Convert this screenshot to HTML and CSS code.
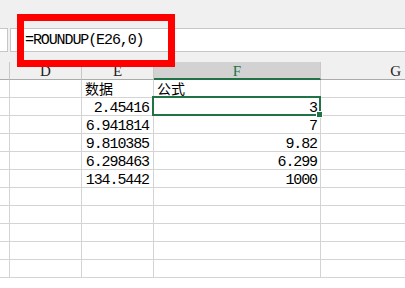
FILE: index.html
```html
<!DOCTYPE html>
<html lang="zh-CN">
<head>
    <meta charset="UTF-8">
    <title>ROUNDUP</title>
    <link rel="stylesheet" href="styles.css">
</head>
<body>
    <div class="formula-area">
        <div class="formula-bar">
            <div class="name-box"></div>
            <div class="fx-box">=ROUNDUP(E26,0)</div>
        </div>
    </div>

    <div class="sheet">
        <div class="row header">
            <div class="cell c-c"></div>
            <div class="cell c-d">D</div>
            <div class="cell c-e">E</div>
            <div class="cell c-f active">F</div>
            <div class="cell c-g">G</div>
        </div>
        <div class="row">
            <div class="cell c-c"></div>
            <div class="cell c-d"></div>
            <div class="cell c-e cjk">数据</div>
            <div class="cell c-f cjk">公式</div>
            <div class="cell c-g"></div>
        </div>
        <div class="row">
            <div class="cell c-c"></div>
            <div class="cell c-d"></div>
            <div class="cell c-e num">2.45416</div>
            <div class="cell c-f num selected">3<span class="fill-handle"></span></div>
            <div class="cell c-g"></div>
        </div>
        <div class="row">
            <div class="cell c-c"></div>
            <div class="cell c-d"></div>
            <div class="cell c-e num">6.941814</div>
            <div class="cell c-f num">7</div>
            <div class="cell c-g"></div>
        </div>
        <div class="row">
            <div class="cell c-c"></div>
            <div class="cell c-d"></div>
            <div class="cell c-e num">9.810385</div>
            <div class="cell c-f num">9.82</div>
            <div class="cell c-g"></div>
        </div>
        <div class="row">
            <div class="cell c-c"></div>
            <div class="cell c-d"></div>
            <div class="cell c-e num">6.298463</div>
            <div class="cell c-f num">6.299</div>
            <div class="cell c-g"></div>
        </div>
        <div class="row">
            <div class="cell c-c"></div>
            <div class="cell c-d"></div>
            <div class="cell c-e num">134.5442</div>
            <div class="cell c-f num">1000</div>
            <div class="cell c-g"></div>
        </div>
        <div class="row">
            <div class="cell c-c"></div><div class="cell c-d"></div><div class="cell c-e"></div><div class="cell c-f"></div><div class="cell c-g"></div>
        </div>
        <div class="row">
            <div class="cell c-c"></div><div class="cell c-d"></div><div class="cell c-e"></div><div class="cell c-f"></div><div class="cell c-g"></div>
        </div>
        <div class="row">
            <div class="cell c-c"></div><div class="cell c-d"></div><div class="cell c-e"></div><div class="cell c-f"></div><div class="cell c-g"></div>
        </div>
        <div class="row">
            <div class="cell c-c"></div><div class="cell c-d"></div><div class="cell c-e"></div><div class="cell c-f"></div><div class="cell c-g"></div>
        </div>
        <div class="row">
            <div class="cell c-c"></div><div class="cell c-d"></div><div class="cell c-e"></div><div class="cell c-f"></div><div class="cell c-g"></div>
        </div>
    </div>

    <!-- annotation box round the formula -->
    <div class="highlight"></div>
</body>
</html>
```

FILE: styles.css
```css
* {
    margin: 0;
    padding: 0;
    box-sizing: border-box;
}

body {
    width: 405px;
    height: 288px;
    overflow: hidden;
    background: #fff;
    position: relative;
    font-family: "Liberation Mono", "DejaVu Sans Mono", monospace;
    color: #000;
}

/* Formula bar */
.formula-area {
    background: #f0f0f0;
    padding: 28px 0 10px;
}

.formula-bar {
    display: flex;
    height: 24px;
}

.name-box {
    width: 8px;
    background: #fff;
    border: 1px solid #c6c6c6;
    border-left: none;
    margin-right: 2px;
}

.fx-box {
    flex: 1;
    background: #fff;
    border: 1px solid #c6c6c6;
    border-right: none;
    padding-left: 14px;
    font-size: 15px;
    letter-spacing: -1.1px;
    line-height: 23px;
    white-space: nowrap;
    overflow: hidden;
}

/* Sheet */
.sheet {
    width: 405px;
    overflow: hidden;
}

.row {
    display: flex;
    height: 18px;
}

.cell {
    height: 18px;
    border-right: 1px solid #d4d4d4;
    border-bottom: 1px solid #d4d4d4;
    font-size: 15px;
    letter-spacing: -1.1px;
    line-height: 21px;
    white-space: nowrap;
    flex-shrink: 0;
    position: relative;
}

.c-c { width: 10px; }
.c-d { width: 72px; }
.c-e { width: 72px; }
.c-f { width: 167px; }
.c-g { width: 84px; border-right: none; }

.header .cell {
    background: #f0f0f0;
    border-right-color: #c8c8c8;
    border-bottom-color: #ababab;
    text-align: center;
    font-family: "Liberation Serif", serif;
    font-size: 15px;
    letter-spacing: 0;
    line-height: 19px;
    color: #222;
}

.header .c-g {
    text-align: right;
    padding-right: 4px;
}

.header .cell.active {
    background: #d2d2d2;
    color: #217346;
    border-bottom: 2px solid #217346;
}

.cjk {
    font-family: "Noto Sans CJK SC", sans-serif;
    font-size: 14px;
    letter-spacing: 0;
    line-height: 17px;
    padding-left: 3px;
}

.num {
    text-align: right;
    padding-right: 3px;
}

.c-e.num {
    padding-right: 4px;
}

.selected::after {
    content: '';
    position: absolute;
    left: -2px;
    top: -2px;
    right: -1px;
    bottom: -1px;
    border: 2px solid #217346;
}

.fill-handle {
    position: absolute;
    right: -3px;
    bottom: -3px;
    width: 5px;
    height: 5px;
    background: #217346;
    border: 1px solid #fff;
    box-sizing: content-box;
    z-index: 2;
}

.highlight {
    position: absolute;
    left: 17px;
    top: 14px;
    width: 158px;
    height: 53px;
    border: 7px solid #ff0000;
}
```
